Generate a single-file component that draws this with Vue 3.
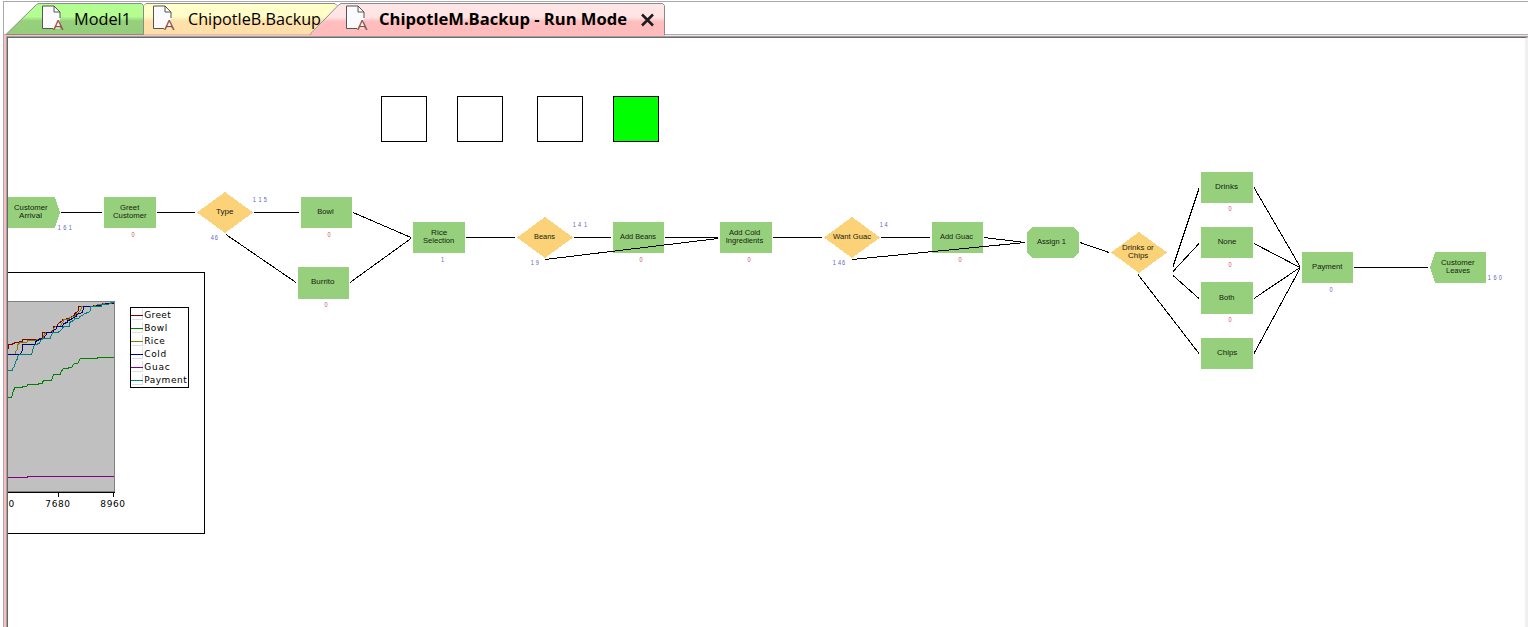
<script setup>
const tabs = [
  { id: 'model', label: 'Model1', len: 57 },
  { id: 'backup-b', label: 'ChipotleB.Backup', len: 133 },
  { id: 'backup-m', label: 'ChipotleM.Backup - Run Mode', len: 248, active: true },
]

const lamps = [
  { x: 381, on: false },
  { x: 457, on: false },
  { x: 537, on: false },
  { x: 613, on: true },
]

const rect = (x, y, w, h) => `M${x} ${y}h${w}v${h}h${-w}z`
const diamond = (x, y) => `M${x} ${y}l28 -20.5l28 20.5l-28 20.5z`

// labels: [text, x, baseline, width]
const nodes = [
  { d: 'M8 197H55L60 212.5L55 228H8z', labels: [['Customer', 14, 210, 33.6], ['Arrival', 19, 218, 23]] },
  { d: rect(104, 197, 52, 31), labels: [['Greet', 120, 210, 19.3], ['Customer', 113, 218, 33.6]] },
  { d: diamond(197, 212.5), decide: true, labels: [['Type', 216, 214, 17.5]] },
  { d: rect(301, 197, 51, 31), labels: [['Bowl', 317.2, 214, 16.5]] },
  { d: rect(298, 267, 51, 32), labels: [['Burrito', 311, 284, 23.5]] },
  { d: rect(413, 222, 52, 31), labels: [['Rice', 431, 235, 16.3], ['Selection', 423, 243, 31.3]] },
  { d: diamond(517, 237.5), decide: true, labels: [['Beans', 534, 239, 21]] },
  { d: rect(613, 222, 51, 31), labels: [['Add Beans', 620, 239, 36]] },
  { d: rect(720, 222, 52, 31), labels: [['Add Cold', 729, 235, 31.3], ['Ingredients', 725.7, 243, 37.5]] },
  { d: diamond(824, 237.5), decide: true, labels: [['Want Guac', 833, 239, 38]] },
  { d: rect(932, 222, 51, 31), labels: [['Add Guac', 940, 239, 33]] },
  { d: 'M1032 227h42l5 6v19l-5 6h-42l-5 -6v-19z', labels: [['Assign 1', 1037, 244, 29]] },
  { d: diamond(1111, 252.5), decide: true, labels: [['Drinks or', 1122, 250, 31.7], ['Chips', 1128, 258, 20.3]] },
  { d: rect(1201, 172, 52, 31), labels: [['Drinks', 1215, 189, 23]] },
  { d: rect(1201, 227, 52, 31), labels: [['None', 1217.7, 244, 18.8]] },
  { d: rect(1201, 282, 52, 32), labels: [['Both', 1219, 300, 15.4]] },
  { d: rect(1201, 338, 52, 31), labels: [['Chips', 1217, 355, 20.3]] },
  { d: rect(1302, 252, 51, 31), labels: [['Payment', 1312, 269, 30.5]] },
  { d: 'M1435 252H1486V283H1435L1430 267.5z', labels: [['Customer', 1441, 265, 33.6], ['Leaves', 1446, 273, 24]] },
]

const links = [
  [61, 212, 102, 212], [157, 212, 195, 212], [254, 212, 299, 212], [226, 234, 296, 282],
  [353, 212, 411, 237], [350, 282, 411, 238], [466, 237, 515, 237], [574, 237, 611, 237],
  [545, 259, 718, 238], [665, 237, 718, 237], [773, 237, 822, 237], [881, 237, 930, 237],
  [852, 259, 1025, 242], [984, 237, 1025, 242], [1080, 242, 1109, 252], [1138, 274, 1199, 353],
  [1173, 266, 1199, 188], [1173, 271, 1199, 243], [1173, 275, 1199, 298],
  [1254, 187, 1300, 266], [1254, 243, 1300, 267], [1254, 298, 1300, 267], [1254, 353, 1300, 268],
  [1354, 267, 1428, 267],
]

// each digit has its own x
const counters = [
  { t: '161', x: [58, 63.5, 69], y: 230 },
  { t: '115', x: [253, 258.7, 264], y: 202 },
  { t: '46', x: [211, 215], y: 240 },
  { t: '141', x: [573, 578.3, 584.3], y: 227 },
  { t: '19', x: [531, 536], y: 265 },
  { t: '14', x: [880, 884.7], y: 227 },
  { t: '146', x: [833, 838.3, 842.3], y: 265 },
  { t: '160', x: [1488, 1493.8, 1499], y: 280 },
  { t: '1', x: [441.3], y: 262 },
  { t: '0', x: [1329.7], y: 292 },
  { t: '0', x: [131.7], y: 237, red: true },
  { t: '0', x: [327.7], y: 237, red: true },
  { t: '0', x: [324.7], y: 307, red: true },
  { t: '0', x: [639.7], y: 262, red: true },
  { t: '0', x: [747.7], y: 262, red: true },
  { t: '0', x: [958.7], y: 262, red: true },
  { t: '0', x: [1228.7], y: 211, red: true },
  { t: '0', x: [1228.7], y: 267, red: true },
  { t: '0', x: [1228.7], y: 322, red: true },
]

const series = [
  { name: 'Guac', color: '#800080', pts: '8,477 28,477 28,476 114,476' },
  { name: 'Bowl', color: '#008000', pts: '8,397 12,397 13,393 14,389 15,389 15,387 23,387 23,386 27,386 28,384 39,384 39,383 43,383 43,381 45,380 52,380 53,377 54,374 61,374 61,372 63,369 64,368 69,368 69,367 72,367 73,365 75,363 78,363 79,361 80,359 81,358 98,358 98,357 114,357' },
  { name: 'Greet', color: '#800000', pts: '8,348 9,348 9,344 13,344 13,343 15,343 15,342 20,342 20,341 23,341 23,339 40,339 40,338 43,338 43,332 52,332 52,331 54,329 54,326 58,326 58,324 60,322 62,321 63,319 67,319 67,318 72,317 72,316 75,315 75,313 77,312 79,310 79,306 93,306 94,305 99,305 99,304 106,303 114,302' },
  { name: 'Rice', color: '#808000', pts: '8,354 16,354 16,351 18,349 18,344 20,343 20,342 27,342 28,340 37,340 37,339 43,339 44,335 46,332 53,332 54,328 56,326 61,326 62,323 64,321 64,319 70,319 70,317 75,316 76,314 79,312 81,310 82,306 95,306 95,305 106,303 114,302' },
  { name: 'Cold', color: '#000080', pts: '8,354 21,354 22,351 23,350 23,344 36,344 36,341 40,339 44,338 45,336 47,334 47,332 53,332 54,330 57,328 57,326 63,326 64,323 68,322 68,320 72,319 72,318 77,316 77,314 83,312 84,306 97,306 97,305 106,304 106,303 114,303' },
  { name: 'Payment', color: '#008080', pts: '8,370 13,370 13,368 15,366 16,361 18,358 18,356 20,354 32,354 33,351 34,346 36,344 40,343 41,340 43,338 51,338 51,336 53,332 58,332 60,331 62,329 64,326 70,326 70,322 72,321 74,320 75,318 79,318 80,316 83,315 85,313 89,312 91,310 91,306 102,306 102,304 109,304 110,303 114,302' },
]

const legend = [
  { name: 'Greet', color: '#800000', len: 26.5 },
  { name: 'Bowl', color: '#008000', len: 23 },
  { name: 'Rice', color: '#808000', len: 20.5 },
  { name: 'Cold', color: '#000080', len: 22 },
  { name: 'Guac', color: '#800080', len: 25.5 },
  { name: 'Payment', color: '#008080', len: 42.5 },
]
</script>

<template>
  <div class="window">
    <nav class="tabs">
      <div v-for="tab in tabs" :key="tab.id" class="tab" :class="tab.id">
        <svg v-if="tab.id === 'model'" class="shape" width="138" height="32" viewBox="0 0 138 32">
          <path d="M0 31.5L30.5 1.5L33 .5H135.500L137.500 2.500V31.5z" fill="url(#green)" stroke="#8b8b8b" />
        </svg>
        <svg v-else-if="tab.id === 'backup-b'" class="shape" width="194" height="32" viewBox="0 0 194 32">
          <path d="M0 31.500V2.500L2 .5H191L193 2.500L167 31.500z" fill="url(#yellow)" />
          <path d="M0 2.500L2 .5H191L193 2.500" fill="none" stroke="#8b8b8b" />
        </svg>
        <svg v-else class="shape" width="356" height="33" viewBox="0 0 356 33">
          <path d="M1 33L29.500 2L32 .5H353.500L355.500 2.500V33z" fill="url(#pink)" />
          <path d="M1 31.500L29.500 2L32 .5H353.500L355.500 2.500V32" fill="none" stroke="#8b8b8b" />
        </svg>
        <svg class="doc" width="24" height="30" viewBox="0 0 24 30">
          <path d="M.5 1H12L18 7V23.500H.5z" fill="#fbfbfd" />
          <path d="M11 23.500H.5V1H12L18 7V13M12 1V7H18" fill="none" stroke="#555" />
          <text x="11" y="24.500" textLength="10.500" lengthAdjust="spacingAndGlyphs" class="doc-letter">A</text>
        </svg>
        <svg class="caption" :width="tab.len + 4" height="28">
          <text x="0" y="20" :textLength="tab.len" lengthAdjust="spacingAndGlyphs" :class="{ bold: tab.active }">{{ tab.label }}</text>
        </svg>
        <svg v-if="tab.active" class="close" width="14" height="14" viewBox="0 0 14 14">
          <path d="M1 1.500L12 12.500M12 1.500L1 12.500" stroke="#1c1c1c" stroke-width="2.500" />
        </svg>
      </div>
    </nav>
    <svg class="defs" width="0" height="0">
      <defs>
        <linearGradient id="green" x1="0" y1="0" x2="0" y2="1">
          <stop offset="0" stop-color="#b4ff91" /><stop offset=".42" stop-color="#b4fd92" />
          <stop offset=".56" stop-color="#96d07d" /><stop offset="1" stop-color="#94ce7b" />
        </linearGradient>
        <linearGradient id="yellow" x1="0" y1="0" x2="0" y2="1">
          <stop offset="0" stop-color="#ffffca" /><stop offset=".42" stop-color="#fffcc8" />
          <stop offset=".56" stop-color="#ffe1ab" /><stop offset="1" stop-color="#ffdfa8" />
        </linearGradient>
        <linearGradient id="pink" x1="0" y1="0" x2="0" y2="1">
          <stop offset="0" stop-color="#ffe6e6" /><stop offset=".42" stop-color="#ffe4e4" />
          <stop offset=".56" stop-color="#ffbdbd" /><stop offset="1" stop-color="#ffbbbb" />
        </linearGradient>
      </defs>
    </svg>
    <main class="frame">
      <svg class="canvas" width="1517" height="589" viewBox="8 38 1517 589">
        <g class="crisp">
          <rect v-for="l in lamps" :key="l.x" :x="l.x + .5" y="96.500" width="45" height="45" :fill="l.on ? '#00ff00' : '#fff'" stroke="#000" />
        </g>
        <g v-for="(n, i) in nodes" :key="'n' + i">
          <path :d="n.d" :fill="n.decide ? '#fbd277' : '#96d07d'" class="crisp" />
          <text v-for="l in n.labels" :key="l[0]" :x="l[1]" :y="l[2]" :textLength="l[3]" lengthAdjust="spacingAndGlyphs" class="node-label">{{ l[0] }}</text>
        </g>
        <g class="crisp" stroke="#000">
          <line v-for="(l, i) in links" :key="'l' + i" :x1="l[0]" :y1="l[1] + .5" :x2="l[2]" :y2="l[3] + .5" />
        </g>
        <g v-for="(c, i) in counters" :key="'c' + i" class="counter" :class="{ red: c.red }">
          <text v-for="(x, k) in c.x" :key="k" :x="x - .2" :y="c.y" textLength="3.100" lengthAdjust="spacingAndGlyphs">{{ c.t[k] }}</text>
        </g>

        <g class="crisp" fill="none">
          <path d="M8 272.500H204.500V533.500H8" stroke="#000" />
          <rect x="8" y="301" width="107" height="191" fill="#c0c0c0" />
          <path d="M8 301.500H114.500V491.500H8" stroke="#808080" />
          <polyline v-for="s in series" :key="s.name" :points="s.pts" :stroke="s.color" transform="translate(-.4 .5)" />
          <path d="M8 492.500H115M58.500 492V497M113.500 492V497" stroke="#000" />
          <rect x="130.500" y="307.500" width="58" height="80" fill="#fff" stroke="#000" />
        </g>
        <g v-for="(e, i) in legend" :key="e.name">
          <path :d="`M132 ${319.5 + i * 13}H142.500V${309 + i * 13}`" fill="none" stroke="#dedede" class="crisp" />
          <path :d="`M131 ${315.5 + i * 13}H143`" :stroke="e.color" class="crisp" />
          <text x="144.200" :y="318 + i * 13" :textLength="e.len" class="chart-text">{{ e.name }}</text>
        </g>
        <text x="8.500" y="507" class="chart-text">0</text>
        <text x="45.300" y="507" textLength="24.800" class="chart-text">7680</text>
        <text x="100.300" y="507" textLength="24.800" class="chart-text">8960</text>
      </svg>
    </main>
  </div>
</template>

<style>
body {
  margin: 0;
  background: #fff;
  overflow: hidden;
}
</style>

<style scoped>
.window {
  box-sizing: border-box;
  width: 1525px;
  height: 626px;
  margin: 1px 0 0 3px;
  border-top: 1px solid #a8a8ad;
  border-left: 1px solid #a8a8ad;
  display: flex;
  flex-direction: column;
}
.tabs {
  display: flex;
  flex: none;
  padding: 1px 0 0 2px;
  box-sizing: border-box;
  border-bottom: 1px solid #a9afaf;
  height: 33px;
}
.tab {
  position: relative;
  display: flex;
  box-sizing: border-box;
  height: 32px;
}
.shape {
  position: absolute;
  left: 0;
  top: 0;
  overflow: visible;
}
.model {
  width: 138px;
  padding-left: 36px;
}
.backup-b {
  width: 194px;
  padding-left: 9px;
}
.backup-m {
  width: 356px;
  margin-left: -29px;
  padding-left: 37px;
}
.doc {
  position: relative;
  flex: none;
  margin-top: 2px;
}
.doc-letter {
  font: 14px "Open Sans", sans-serif;
  fill: #934f45;
}
.caption {
  position: relative;
  flex: none;
  margin: 2px 0 0 8px;
  overflow: visible;
  font: 16.500px "Open Sans", "Noto Sans", sans-serif;
}
.backup-b .caption {
  margin-left: 11px;
}
.backup-m .caption {
  margin-left: 9px;
}
.bold {
  font-weight: 700;
}
.close {
  position: relative;
  flex: none;
  margin: 10px 0 0 10px;
}
.defs {
  position: absolute;
}
.frame {
  flex: 1;
  min-height: 0;
  box-sizing: border-box;
  padding: 1px 0 0 2px;
  background: linear-gradient(90deg, #ffbdbd 0 661px, #f8dfe3 661px);
}
.canvas {
  display: block;
  background: #fff;
  border-top: 1px solid #696969;
  border-left: 1px solid #696969;
  box-shadow: 0 0 0 1px #a0a0a0;
  border-right: 4px solid #f0f0f0;
  margin: 1px 0 0 1px;
}
.crisp {
  shape-rendering: crispEdges;
}
.node-label {
  font: 8px "Liberation Sans", Arial, sans-serif;
  fill: #15220f;
}
.counter {
  font: 7px "Liberation Sans", Arial, sans-serif;
  fill: #5c62c4;
}
.red {
  fill: #d0485c;
}
.chart-text {
  font: 9px "DejaVu Sans", Verdana, sans-serif;
  fill: #000;
}
</style>
